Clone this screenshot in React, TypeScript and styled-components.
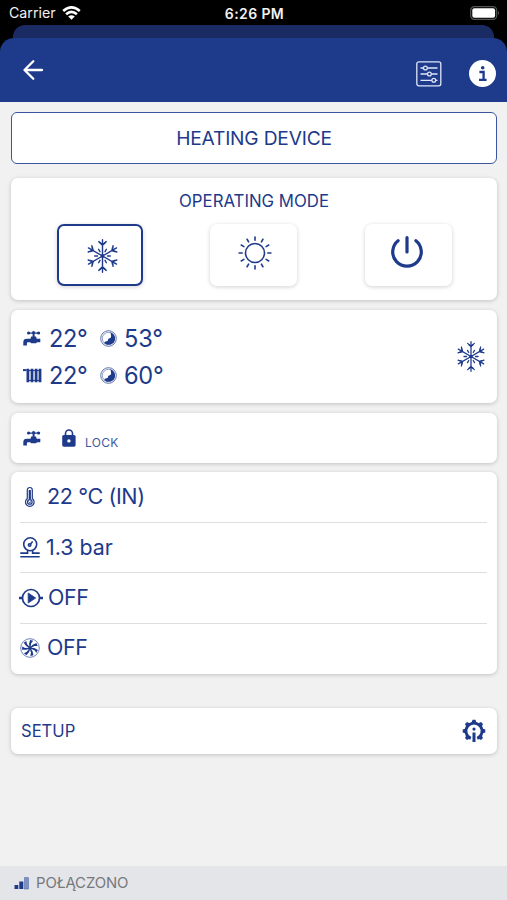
import React from "react";
import styled, { createGlobalStyle } from "styled-components";

const NAVY = "#1e3a8a";

const Global = createGlobalStyle`
  * { box-sizing: border-box; }
  body { margin: 0; background: #f1f1f2; font-family: Inter, "Liberation Sans", sans-serif; color: ${NAVY}; }
  svg { display: block; flex: none; overflow: visible; }
  button { font: inherit; color: inherit; padding: 0; border: 0; background: none; }
`;

const Screen = styled.div`
  width: 507px;
  height: 900px;
  overflow: hidden;
  display: flex;
  flex-direction: column;
`;

const Top = styled.div`
  background: #000;
  height: 102px;
  display: flex;
  flex-direction: column;
`;

const StatusBar = styled.div`
  height: 25px;
  display: grid;
  grid-template-columns: 1fr auto 1fr;
  align-items: center;
  padding: 2px 7px 0 9px;
  color: #f2f2f2;
`;

const Carrier = styled.div`
  display: flex;
  align-items: center;
  gap: 6px;
`;

const BatterySlot = styled.div`
  justify-self: end;
  margin-top: -1px;
`;

const SheetBehind = styled.div`
  height: 13px;
  margin: 0 13px;
  border-radius: 12px 12px 0 0;
  background: #1a2a62;
`;

const Header = styled.header`
  flex: 1;
  display: flex;
  align-items: center;
  padding: 0 11px 0 23px;
  border-radius: 14px 14px 0 0;
  background: ${NAVY};
`;

const BackButton = styled.button`
  margin: -1px auto 0 0;
`;

const HeaderTools = styled.div`
  display: flex;
  align-items: center;
  gap: 27px;
  padding-top: 7px;
`;

const Content = styled.main`
  flex: 1;
  padding: 10px 10px 0 11px;
`;

const Text = styled.span<{ $size: number; $spacing?: number; $weight?: number; $color?: string }>`
  font-size: ${(p) => p.$size}px;
  letter-spacing: ${(p) => p.$spacing ?? 0}px;
  font-weight: ${(p) => p.$weight ?? 400};
  color: ${(p) => p.$color ?? "inherit"};
  line-height: 1;
  white-space: nowrap;
`;

const DeviceTitle = styled.div`
  height: 52px;
  display: flex;
  align-items: center;
  justify-content: center;
  padding-top: 1px;
  background: #fff;
  border: 1.5px solid #3c569c;
  border-radius: 6px;
`;

const Card = styled.section<{ $height: number; $top: number }>`
  height: ${(p) => p.$height}px;
  margin-top: ${(p) => p.$top}px;
  background: #fff;
  border-radius: 7px;
  box-shadow: 0 1px 4px rgba(0, 0, 0, 0.2);
`;

const ModeCard = styled(Card)`
  display: flex;
  flex-direction: column;
  align-items: center;
  padding-top: 15px;
`;

const ModeButtons = styled.div`
  display: flex;
  justify-content: space-between;
  width: 395px;
  margin-top: 14px;
`;

const ModeButton = styled.button<{ $selected?: boolean }>`
  width: ${(p) => (p.$selected ? 86 : 87)}px;
  height: 62px;
  display: flex;
  align-items: center;
  justify-content: center;
  background: #fff;
  border: ${(p) => (p.$selected ? `2px solid ${NAVY}` : "0")};
  border-radius: 7px;
  box-shadow: 0 1px 4px rgba(0, 0, 0, 0.18);
`;

const IconNudge = styled.span<{ $x: number; $y: number }>`
  margin: ${(p) => p.$y}px 0 0 ${(p) => p.$x}px;
`;

const ReadingsCard = styled(Card)`
  display: flex;
  align-items: center;
  justify-content: space-between;
  padding: 0 12px;
`;

const Readings = styled.div`
  display: grid;
  grid-template-columns: 26px 51px 24px auto;
  grid-auto-rows: 37px;
  align-items: center;
  padding-top: 1px;
`;

const LockCard = styled(Card)`
  display: flex;
  align-items: center;
  padding: 1px 12px 0;
`;

const LockSlot = styled.div`
  margin: 0 9px 2px 21px;
`;

const LockLabel = styled.div`
  display: flex;
  padding-top: 9px;
`;

const ListCard = styled(Card)`
  padding: 0 10px 0 9px;
`;

const Row = styled.div<{ $gap: number }>`
  height: 50.2px;
  display: flex;
  align-items: center;
  gap: ${(p) => p.$gap}px;
  & + & { border-top: 1.5px solid #dedee0; }
`;

const PumpSlot = styled.div`
  margin-left: -1px;
`;

const SetupCard = styled(Card)`
  display: flex;
  align-items: center;
  justify-content: space-between;
  padding: 0 11px 0 10px;
`;

const Footer = styled.footer`
  height: 34px;
  display: flex;
  align-items: center;
  gap: 7px;
  padding-left: 14px;
  background: #e4e5e9;
`;

const Wifi = () => (
  <svg width="19" height="14" viewBox="0 0 19 14" fill="none" stroke="#fff" strokeWidth="2.6">
    <path d="M1.2 5.1Q9.5-2.2 17.8 5.1M4.1 8.2Q9.5 3.5 14.9 8.2" />
    <path d="M6.2 10.5Q9.5 7.8 12.8 10.5L9.5 13.8Z" fill="#fff" stroke="none" />
  </svg>
);

const Battery = () => (
  <svg width="30" height="14" viewBox="0 0 30 14">
    <rect x=".7" y=".7" width="26" height="12.6" rx="3.6" fill="none" stroke="#555" strokeWidth="1.2" />
    <rect x="2.3" y="2.3" width="22.8" height="9.4" rx="2" fill="#fff" />
    <path d="M28.2 4.8q1.6 2.2 0 4.4z" fill="#777" />
  </svg>
);

const BackArrow = () => (
  <svg width="20" height="20" viewBox="0 0 20 20" fill="none" stroke="#fff" strokeWidth="2.3" strokeLinecap="round" strokeLinejoin="round">
    <path d="M19 10H1.5M10.3 1.2L1.5 10l8.8 8.8" />
  </svg>
);

const Sliders = () => (
  <svg width="26" height="26" viewBox="0 0 26 26" fill="none" stroke="#dfe6fa" strokeWidth="1.3">
    <rect x=".8" y=".8" width="24" height="24" rx="2" />
    <path d="M4.5 7h3m4 0h10M4.5 13h7m4 0h6M4.5 19.3h11.3m4 0h1.7" />
    <circle cx="9.4" cy="7" r="1.9" />
    <circle cx="13.4" cy="13" r="1.9" />
    <circle cx="17.8" cy="19.3" r="1.9" />
  </svg>
);

const Info = () => (
  <svg width="27" height="27" viewBox="0 0 27 27">
    <circle cx="13.5" cy="13.5" r="13.5" fill="#fff" />
    <circle cx="13.7" cy="7.8" r="1.8" fill={NAVY} />
    <path d="M10.4 12h4.2v7.8M10 19.9h7.6" fill="none" stroke={NAVY} strokeWidth="2.3" />
  </svg>
);

const Snowflake = ({ width, height }: { width: number; height: number }) => (
  <svg width={width} height={height} viewBox="-15.5 -17 31 34" preserveAspectRatio="none" fill="none" stroke={NAVY} strokeWidth="1.4" strokeLinecap="round">
    {[0, 60, 120, 180, 240, 300].map((a) => (
      <g key={a} transform={`rotate(${a})`}>
        <path d="M0 0V-16.2M-3.7-14.4L0-11.3 3.7-14.4" />
        <path d="M-2.3-12.9L0-11 2.3-12.9" />
        <path d="M0-5V-7.8" transform="rotate(30)" />
      </g>
    ))}
    <circle r="1.9" fill={NAVY} stroke="none" />
  </svg>
);

const Sun = () => (
  <svg width="34" height="34" viewBox="-17 -17 34 34" fill="none" stroke={NAVY} strokeWidth="1.6" strokeLinecap="round">
    <circle r="9.5" />
    {Array.from({ length: 12 }, (_, i) => (
      <path key={i} d="M0-12.8V-15.9" transform={`rotate(${i * 30})`} />
    ))}
  </svg>
);

const Power = () => (
  <svg width="32" height="32" viewBox="-16 -16 32 32" fill="none" stroke={NAVY} strokeWidth="3.2" strokeLinecap="round">
    <path d="M-8.9-11.3A14.3 14.3 0 1 0 8.9-11.3M0-14.4V0" />
  </svg>
);

const Tap = () => (
  <svg width="18" height="15" viewBox="0 0 18 15" fill={NAVY}>
    <circle cx="5.6" cy="2" r="1.6" />
    <circle cx="10.6" cy="1.6" r="1.6" />
    <circle cx="15.6" cy="2" r="1.6" />
    <path d="M5 1.4h11v1.4H5zM9.6 2h2v5h-2z" />
    <path d="M8.2 5.6h4.8l.7 2.2h3.6v3.4H14l-1 1H8.2l-1-1H4.9q-1 0-1 1v2.2H.3v-3.2q0-3.4 3.5-3.4h3.7z" />
  </svg>
);

const Radiator = () => (
  <svg width="19" height="15" viewBox="0 0 19 15" fill="none" stroke={NAVY}>
    <path d="M0 2.1h3.5" strokeWidth="2" />
    <path d="M4.9 .8v13.4M9 .8v13.4M13.1 .8v13.4M17 .8v13.4" strokeWidth="2.8" />
    <path d="M4 2.6h14M4 12.4h14" strokeWidth="1" />
  </svg>
);

const Target = () => (
  <svg width="17" height="17" viewBox="0 0 17 17">
    <circle cx="8.5" cy="8.5" r="7.8" fill="#fff" stroke={NAVY} strokeWidth=".9" opacity=".8" />
    <circle cx="8.5" cy="8.5" r="6.2" fill="none" stroke={NAVY} strokeWidth=".7" opacity=".7" />
    <path d="M10.4 2.3A6.6 6.6 0 0 1 13.6 12.7Q9.1 16.6 4.3 13.2Q4.5 11.1 6.8 11.3Q8.2 11.2 8.1 9.3Q8.6 8.3 10 8.3Q12 7.2 10.4 2.3Z" fill={NAVY} />
  </svg>
);

const Padlock = () => (
  <svg width="14" height="18" viewBox="0 0 14 18">
    <path d="M3.5 7V4.5a3.5 3.5 0 0 1 7 0V7" fill="none" stroke={NAVY} strokeWidth="1.6" />
    <rect x=".2" y="6" width="13.4" height="11.7" rx="1.6" fill={NAVY} />
    <circle cx="6.9" cy="11.9" r="1.7" fill="#fff" />
  </svg>
);

const Thermometer = () => (
  <svg width="22" height="20" viewBox="0 0 22 20" fill="none" stroke={NAVY} strokeWidth="1.2">
    <path d="M7.3 11.5V3a2.5 2.5 0 0 1 5 0v8.5a4.3 4.3 0 1 1-5 0z" />
    <path d="M9.8 3v9" strokeWidth="2.2" />
    <circle cx="9.8" cy="14.9" r="2.3" />
    <path d="M8.6 14.6l1.2 1.1 1.2-1.1" strokeWidth="1" />
  </svg>
);

const Gauge = () => (
  <svg width="20" height="21" viewBox="0 0 20 21" fill="none" stroke={NAVY} strokeWidth="1.6">
    <circle cx="10.2" cy="7.3" r="6.5" />
    <circle cx="9.6" cy="8" r="1.2" />
    <path d="M10.5 7l2.2-2.6M7.6 13.6v2.5H.3M12.6 13.6v2.5h7.1M.3 19.7h19.4" />
  </svg>
);

const Pump = () => (
  <svg width="24" height="20" viewBox="0 0 24 20" fill="none" stroke={NAVY} strokeWidth="1.7">
    <circle cx="12" cy="10" r="8.5" />
    <path d="M9.2 5l7.5 5-7.5 5z" fill={NAVY} strokeWidth=".8" />
    <path d="M0 10h3.6M20.4 10H24" strokeWidth="2.4" />
  </svg>
);

const Fan = () => (
  <svg width="20" height="20" viewBox="-10 -10 20 20">
    <circle r="9.3" fill="none" stroke={NAVY} strokeWidth=".8" opacity=".8" />
    {Array.from({ length: 7 }, (_, i) => (
      <path key={i} d="M-.6-1L-.9-4.2.1-8.1 3.2-7.3 1.2-4.8.6-1Z" fill={NAVY} transform={`rotate(${i * 51.43})`} />
    ))}
    <circle r="1.7" fill={NAVY} />
  </svg>
);

const GearInfo = () => (
  <svg width="24" height="24" viewBox="-12 -12 24 24" fill="none" stroke={NAVY}>
    <path d="M-3.2 7.4A8 8 0 1 1 3.2 7.4" strokeWidth="2.8" />
    {[-135, -90, -45, 0, 45, 90, 135].map((a) => (
      <path key={a} d="M-1.7-8.5L-1-10.7H1L1.7-8.5Z" fill={NAVY} strokeWidth="1.2" transform={`rotate(${a})`} />
    ))}
    <circle cy="-1.9" r="1.6" fill={NAVY} stroke="none" />
    <path d="M0 1.5V11" strokeWidth="3" />
  </svg>
);

const Signal = () => (
  <svg width="15" height="13" viewBox="0 0 15 13">
    <rect x=".5" y="8" width="3.8" height="4" fill={NAVY} />
    <rect x="5.3" y="4.5" width="4" height="7.5" fill={NAVY} />
    <rect x="10.6" y=".7" width="3.8" height="11.3" fill="#7e91c1" stroke="#526bab" strokeWidth=".6" />
  </svg>
);

export default function App() {
  return (
    <Screen>
      <Global />
      <Top>
        <StatusBar>
          <Carrier>
            <Text $size={14.2}>Carrier</Text>
            <Wifi />
          </Carrier>
          <Text $size={14} $weight={600} $spacing={0.4}>6:26 PM</Text>
          <BatterySlot><Battery /></BatterySlot>
        </StatusBar>
        <SheetBehind />
        <Header>
          <BackButton aria-label="Back"><BackArrow /></BackButton>
          <HeaderTools><Sliders /><Info /></HeaderTools>
        </Header>
      </Top>
      <Content>
        <DeviceTitle><Text $size={19.2} $spacing={-0.2}>HEATING DEVICE</Text></DeviceTitle>
        <ModeCard $height={122} $top={14}>
          <Text $size={16.8}>OPERATING MODE</Text>
          <ModeButtons>
            <ModeButton $selected aria-label="Cooling">
              <IconNudge $x={5} $y={3}><Snowflake width={31} height={34} /></IconNudge>
            </ModeButton>
            <ModeButton aria-label="Heating">
              <IconNudge $x={3} $y={-4}><Sun /></IconNudge>
            </ModeButton>
            <ModeButton aria-label="Power">
              <IconNudge $x={-2} $y={-5}><Power /></IconNudge>
            </ModeButton>
          </ModeButtons>
        </ModeCard>
        <ReadingsCard $height={93} $top={10}>
          <Readings>
            <Tap /><Text $size={23.6} $spacing={-0.4}>22°</Text><Target /><Text $size={23.6} $spacing={-0.2}>53°</Text>
            <Radiator /><Text $size={23.6} $spacing={-0.4}>22°</Text><Target /><Text $size={23.6} $spacing={-0.3}>60°</Text>
          </Readings>
          <Snowflake width={28} height={31} />
        </ReadingsCard>
        <LockCard $height={50} $top={10}>
          <Tap />
          <LockSlot><Padlock /></LockSlot>
          <LockLabel><Text $size={12} $spacing={0.3} $color="#40589d">LOCK</Text></LockLabel>
        </LockCard>
        <ListCard $height={202} $top={9}>
          <Row $gap={5}><Thermometer /><Text $size={21.6} $spacing={-0.4}>22 °C (IN)</Text></Row>
          <Row $gap={6}><Gauge /><Text $size={21.4}>1.3 bar</Text></Row>
          <Row $gap={5}><PumpSlot><Pump /></PumpSlot><Text $size={21.4} $spacing={-0.4}>OFF</Text></Row>
          <Row $gap={7}><Fan /><Text $size={21.4} $spacing={-0.4}>OFF</Text></Row>
        </ListCard>
        <SetupCard $height={46} $top={34}>
          <Text $size={16.6}>SETUP</Text>
          <GearInfo />
        </SetupCard>
      </Content>
      <Footer>
        <Signal />
        <Text $size={14.9} $spacing={-0.1} $color="#77787c">POŁĄCZONO</Text>
      </Footer>
    </Screen>
  );
}
